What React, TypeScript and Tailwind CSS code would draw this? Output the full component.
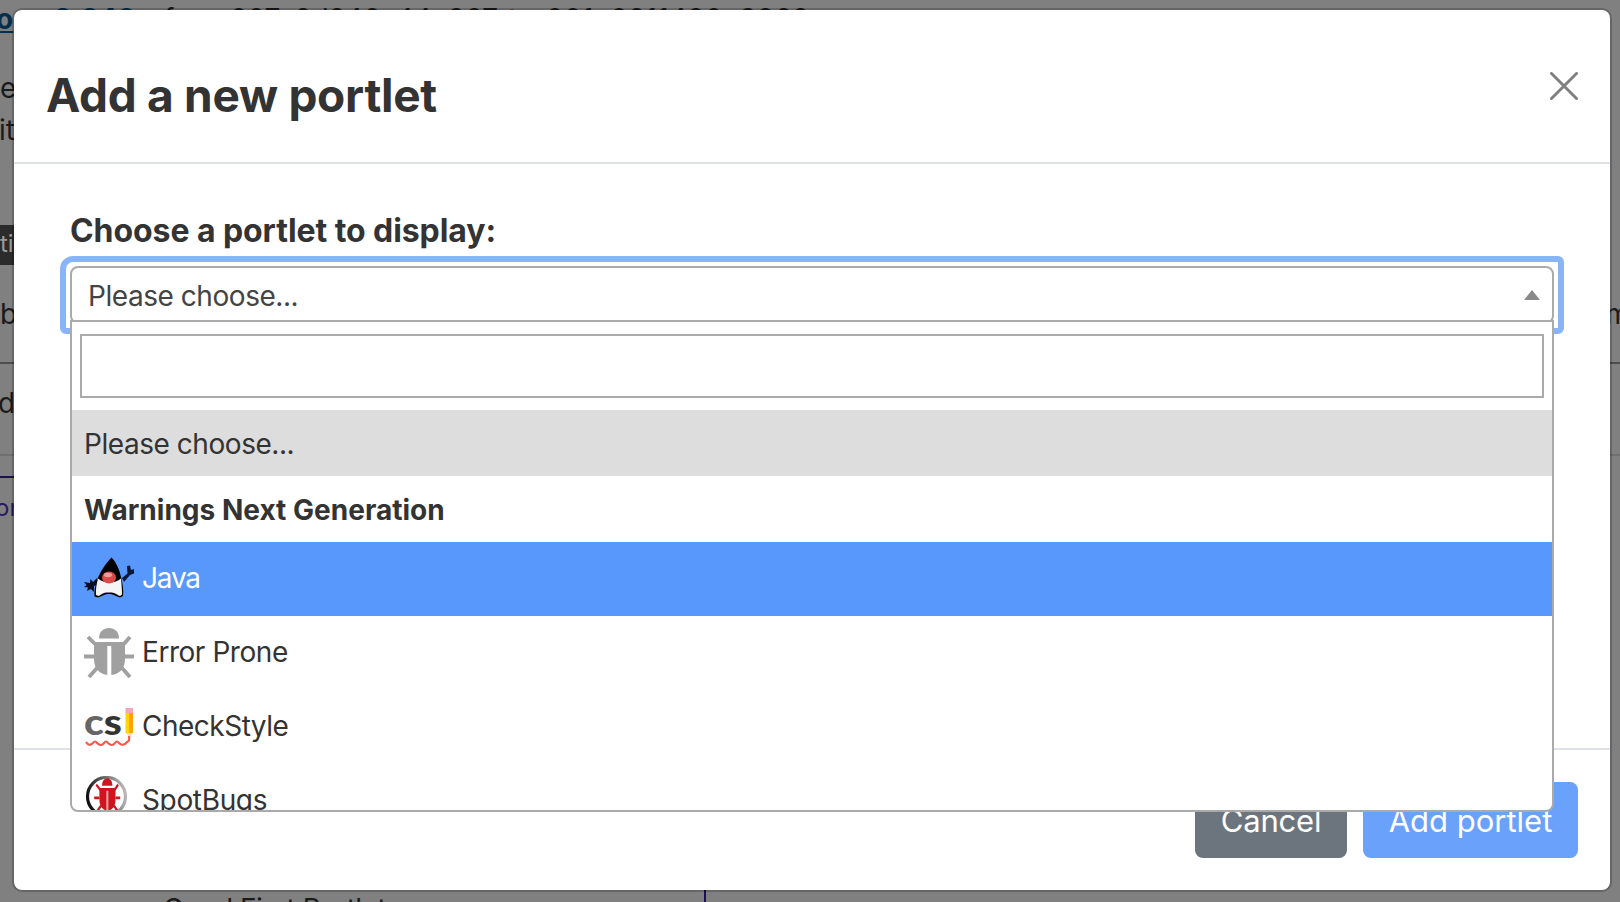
import React from "react";

function DukeIcon() {
  return (
    <svg width="50" height="50" viewBox="0 0 50 50" className="shrink-0">
      <path d="M13 24 L9 28 L6.500 25 L6 29 L0 28 L2.500 31 L0 33 L4 33.500 L3 37 L7 35 L10 38 L10 32 L14 30Z" fill="#0a1020" />
      <path d="M38 24 L43.500 19.500 L43 12 L46 11.500 L47 16 L50 15 V19.500 L46 21 L40 28Z" fill="#0a1838" />
      <path d="M27.500 3.500 C22 9 16 18 13.500 25 C11 31 10 37 10.500 42.500 L14 43.500 C18 42.500 20 40 25 40 C30 40 32 42.500 36 43.500 L39 42 C39.500 37 39 31 37.500 25 C35.500 15 32 8 27.500 3.500Z" fill="#000" />
      <path d="M14 24.500 C12.500 30 11.500 36 12 41 L14.500 42 C18 40.500 18 38.500 25 38.500 C32 38.500 32 40.500 36 42 L38 40.500 C38 35 37.500 30 37 24.500 C31 30 20 30 14 24.500Z" fill="#f5f5f5" />
      <ellipse cx="25" cy="23.500" rx="7" ry="6" fill="#da4a48" />
      <ellipse cx="24" cy="21" rx="4" ry="2.200" fill="#f09a98" />
    </svg>
  );
}

function BugShape({ color, slot }: { color: string; slot: string }) {
  return (
    <>
      <path d="M15 10.500 C15 3.500 19.500 0 25 0 C30.500 0 35 3.500 35 10.500Z" fill={color} />
      <path d="M10 14 H41 V31 C41 41 35 47 25.500 47 C16 47 10 41 10 31Z" fill={color} />
      <path d="M4 9 L12 17 M46 9 L39 17 M0 28.500 H10 M41 28.500 H50 M13 40 L5 49 M38 40 L46 49" stroke={color} strokeWidth="3.800" fill="none" />
      <path d="M25.300 18 V47" stroke={slot} strokeWidth="4" />
    </>
  );
}

function BugIcon() {
  return (
    <svg width="50" height="50" viewBox="0 0 50 50" className="shrink-0">
      <BugShape color="#a0a0a0" slot="#fff" />
    </svg>
  );
}

function CheckStyleIcon() {
  return (
    <svg width="50" height="50" viewBox="0 0 50 50" className="shrink-0">
      <text x="0" y="33" fontFamily="Lato, sans-serif" fontWeight="900" fontSize="36" textLength="38" lengthAdjust="spacingAndGlyphs">
        <tspan fill="#666">c</tspan>
        <tspan fill="#333">s</tspan>
      </text>
      <rect x="41.500" y="6" width="7.500" height="5" fill="#f5a9b8" />
      <rect x="41.500" y="11" width="4" height="20" fill="#ffd800" />
      <rect x="45" y="11" width="4" height="20" fill="#ffa200" />
      <path d="M42 31 H49 L45.500 36Z" fill="#fbd9b5" />
      <path d="M2 40 Q5 45 9 41 Q11 38 13 41 Q17 45 20 41 Q22 38 24 41 Q28 45 31 41 Q33 38 35 41 Q39 45 43 40 Q46 39 45 34" stroke="#f5584c" strokeWidth="2.200" fill="none" />
    </svg>
  );
}

function SpotBugsIcon() {
  return (
    <svg width="50" height="50" viewBox="0 0 50 50" className="shrink-0">
      <defs>
        <linearGradient id="ring" x1="0" y1="0.500" x2="1" y2="0.300">
          <stop offset="0" stopColor="#111" />
          <stop offset="1" stopColor="#bbb" />
        </linearGradient>
      </defs>
      <circle cx="22.500" cy="20.500" r="19" stroke="url(#ring)" strokeWidth="3.200" fill="#fff" />
      <g transform="translate(10.200 2.500) scale(0.520 0.680)">
        <BugShape color="#d0141e" slot="#f0a0a4" />
      </g>
    </svg>
  );
}

const tools = [
  { name: "Java", Icon: DukeIcon, row: "bg-[#5897fb] text-white", spacing: "tracking-[-1.2px]" },
  { name: "Error Prone", Icon: BugIcon, row: "", spacing: "tracking-[-0.45px]" },
  { name: "CheckStyle", Icon: CheckStyleIcon, row: "", spacing: "tracking-[-0.5px]" },
  { name: "SpotBugs", Icon: SpotBugsIcon, row: "", spacing: "tracking-[-0.35px]" },
];

function Page() {
  return (
    <div className="flex h-[902px] w-[1620px] flex-col overflow-hidden bg-[#808080] text-[28px] leading-[34px] whitespace-pre text-[#1a1a1a]">
      <p className="-ml-1 flex h-[71px] shrink-0 pt-[2px]">
        <span className="w-[58px] font-bold text-[#062f4d] underline">o</span>
        <span className="w-[110px] font-bold text-[#062f4d]">2.240</span>
        <span className="w-[66px]">from</span>
        <span className="w-[278px] tracking-[-0.15px]">007c2d246a44e967</span>
        <span className="w-[38px]">to</span>
        <span className="tracking-[0.3px]">001e0211480c3868</span>
      </p>
      <p className="h-[42px] shrink-0">e</p>
      <p className="-ml-px h-[112px] shrink-0">it</p>
      <div className="h-[40px] w-[800px] shrink-0 bg-[#2b2b2b] text-[24px] leading-[37px] text-[#999]">ti</div>
      <div className="flex h-[99px] shrink-0 justify-between border-b-2 border-[#4d4d4d] pt-8">
        <span>b</span>
        <span className="-mr-2.5">m</span>
      </div>
      <p className="-ml-0.5 h-[92px] shrink-0 border-b-2 border-[#6f6f6f] pt-[22px]">d</p>
      <div className="mt-5 flex w-[706px] grow flex-col justify-between border-t-2 border-r-2 border-[#1a1052]">
        <p className="-ml-[5px] pt-[13px] text-[24px] text-[#2a1a66]">on</p>
        <p className="-mb-6 pl-[163px] tracking-[-0.5px]">Good First Portlet</p>
      </div>
    </div>
  );
}

function PortletMenu() {
  return (
    <div className="absolute -left-0.5 top-[52px] z-10 h-[492px] w-[1484px] overflow-hidden rounded-b-lg border-2 border-[#aaa] bg-white text-[28px]">
      <div className="h-[88px] px-2 pt-3">
        <input className="block h-16 w-full border-2 border-[#aaa] outline-none" />
      </div>
      <div className="flex h-[66px] items-center bg-[#ddd] pt-[2px] pl-3 tracking-[-0.45px]">Please choose...</div>
      <div className="flex h-[66px] items-center pt-[2px] pl-3 font-bold tracking-[0.02px]">Warnings Next Generation</div>
      <ul>
        {tools.map(({ name, Icon, row, spacing }) => (
          <li key={name} className={`flex h-[74px] items-center gap-2 pl-3 ${row}`}>
            <Icon />
            <span className={`pb-[2px] ${spacing}`}>{name}</span>
          </li>
        ))}
      </ul>
    </div>
  );
}

export default function App() {
  return (
    <div className="relative h-[902px] w-[1620px] overflow-hidden font-['Inter',sans-serif] text-[#333]">
      <Page />
      <div className="absolute inset-0 px-3 pt-2">
        <div className="flex h-[884px] w-[1600px] flex-col rounded-[10px] border-2 border-black/20 bg-white bg-clip-padding">
          <header className="flex h-[154px] shrink-0 justify-between border-b-2 border-[#dee2e6] px-8">
            <h1 className="pt-[57px] text-[46px] leading-[56px] font-bold tracking-[-0.28px]">Add a new portlet</h1>
            <svg width="28" height="28" viewBox="0 0 28 28" className="mt-[62px]">
              <path d="M1.500 1.500 L26.500 26.500 M26.500 1.500 L1.500 26.500" stroke="#808080" strokeWidth="3" strokeLinecap="round" />
            </svg>
          </header>
          <main className="h-[584px] shrink-0 px-14 pt-[46px]">
            <label className="block h-14 text-[32px] leading-[42px] font-bold tracking-[-0.07px]">Choose a portlet to display:</label>
            <div className="relative h-[58px] w-[1484px] rounded-lg border-2 border-[#aaa]">
              <div className="absolute -top-3 -right-3 -left-3 h-[78px] rounded-md rounded-tl-[13px] border-[6px] border-[#8ab4f8]" />
              <div className="flex h-[54px] items-center justify-between pr-3 pl-4">
                <span className="pt-[2px] text-[28px] tracking-[-0.45px] text-[#444]">Please choose...</span>
                <svg width="16" height="10" viewBox="0 0 16 10">
                  <path d="M8 0 L16 10 H0Z" fill="#888" />
                </svg>
              </div>
              <PortletMenu />
            </div>
          </main>
          <footer className="flex grow items-start justify-end gap-4 border-t-2 border-[#dee2e6] px-8 pt-8 text-[31px] text-white">
            <button className="h-[76px] w-[152px] rounded-lg bg-[#6c757d] pt-[2px] tracking-[-0.2px]">Cancel</button>
            <button className="h-[76px] w-[215px] rounded-lg bg-[#6aa1fa] pt-[2px]">Add portlet</button>
          </footer>
        </div>
      </div>
    </div>
  );
}
